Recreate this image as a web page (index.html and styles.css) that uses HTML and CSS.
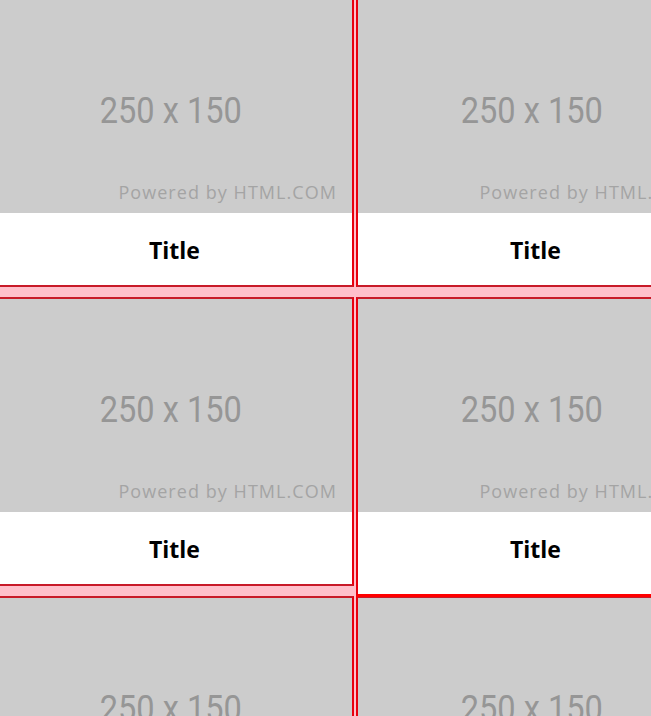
FILE: index.html
```html
<!DOCTYPE html>
<html lang="en">
<head>
<meta charset="utf-8">
<title>Cards</title>
<link rel="stylesheet" href="styles.css">
</head>
<body>
<div class="grid">
  <div class="card">
    <div class="thumb"><span class="size">250 x 150</span><span class="powered">Powered by HTML.COM</span></div>
    <div class="title">Title</div>
  </div>
  <div class="card">
    <div class="thumb"><span class="size">250 x 150</span><span class="powered">Powered by HTML.COM</span></div>
    <div class="title">Title</div>
  </div>
  <div class="card">
    <div class="thumb"><span class="size">250 x 150</span><span class="powered">Powered by HTML.COM</span></div>
    <div class="title">Title</div>
  </div>
  <div class="card card-active">
    <div class="thumb"><span class="size">250 x 150</span><span class="powered">Powered by HTML.COM</span></div>
    <div class="title">Title</div>
  </div>
  <div class="card">
    <div class="thumb"><span class="size">250 x 150</span><span class="powered">Powered by HTML.COM</span></div>
    <div class="title">Title</div>
  </div>
  <div class="card">
    <div class="thumb"><span class="size">250 x 150</span><span class="powered">Powered by HTML.COM</span></div>
    <div class="title">Title</div>
  </div>
</div>
</body>
</html>
```

FILE: styles.css
```css
html, body {
  margin: 0;
  padding: 0;
  background: #ffffff;
}

body {
  width: 651px;
  height: 716px;
  overflow: hidden;
}

.grid {
  display: grid;
  grid-template-columns: 359px 359px;
  column-gap: 2px;
  row-gap: 10px;
  margin: -2px 0 0 -5px;
  width: 720px;
  background: #ffc0cb;
}

.card {
  display: flex;
  flex-direction: column;
  background: #ffffff;
  border-style: solid;
  border-width: 2px;
  border-color: #c81a28 #e8000e;
}

.card-active {
  border-bottom: 3px solid #ff0000;
  margin-bottom: -11px;
  z-index: 1;
}

.thumb {
  height: 213px;
  display: flex;
  flex-direction: column;
  align-items: center;
  background: #cccccc;
}

.size {
  margin-top: 92px;
  font-family: Roboto, "Liberation Sans", sans-serif;
  font-size: 37px;
  line-height: 37px;
  color: #969696;
  transform: translateX(-4px) scaleX(0.88);
  white-space: nowrap;
}

.powered {
  margin-top: auto;
  margin-bottom: 10px;
  margin-right: 15px;
  align-self: flex-end;
  font-family: "Open Sans", "DejaVu Sans", sans-serif;
  font-size: 18px;
  line-height: 21px;
  letter-spacing: 1.05px;
  color: #a4a4a4;
  white-space: nowrap;
}

.title {
  height: 70px;
  padding-top: 2px;
  display: flex;
  align-items: center;
  justify-content: center;
  font-family: "Open Sans", "Noto Sans", sans-serif;
  font-weight: 700;
  font-size: 23px;
  color: #000000;
}
```
